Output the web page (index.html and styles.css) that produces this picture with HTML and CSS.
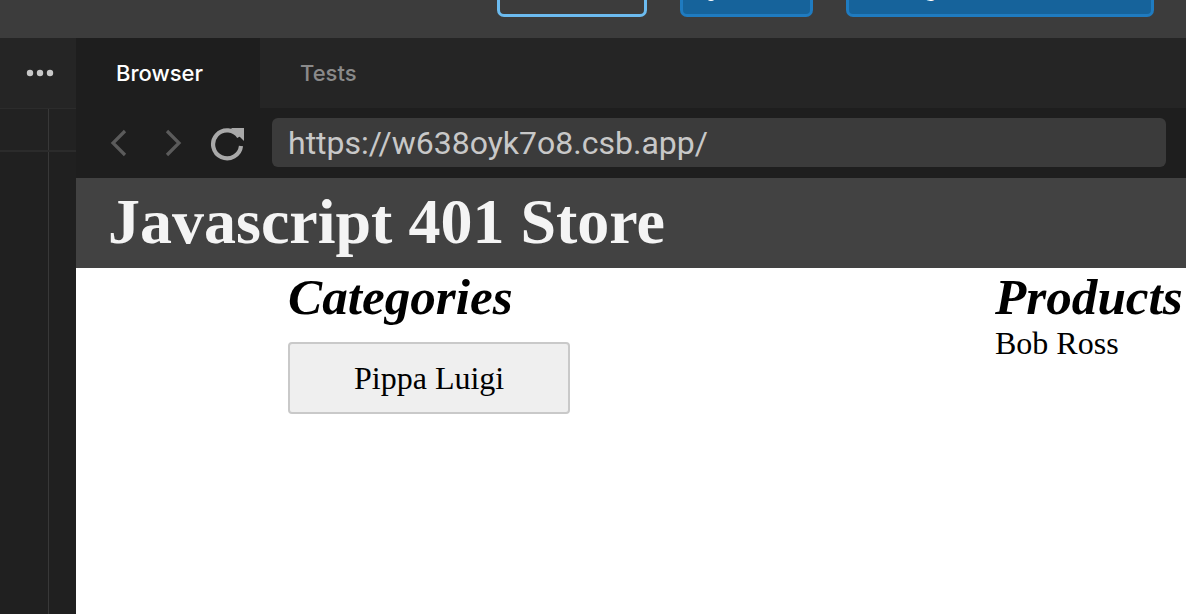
FILE: index.html
```html
<!DOCTYPE html>
<html>
<head>
<meta charset="utf-8">
<link rel="stylesheet" href="styles.css">
</head>
<body>
<div class="topbar">
  <div class="tbtn tbtn-outline"><span class="tlabel">Share</span></div>
  <div class="tbtn tbtn-blue tb2">
    <svg class="ticon" width="20" height="20" viewBox="0 0 20 20"><circle cx="10" cy="14" r="3" fill="none" stroke="#fff" stroke-width="2.2"/><path d="M10 4 V11" stroke="#fff" stroke-width="2.2"/></svg>
    <span class="tlabel">Fork</span>
  </div>
  <div class="tbtn tbtn-blue tb3">
    <svg class="ticon" width="20" height="20" viewBox="0 0 20 20"><path d="M6 10 V17 M14 10 V17" stroke="#fff" stroke-width="2.4"/></svg>
    <span class="tlabel">Sign in</span>
  </div>
</div>
<div class="main">
  <aside class="side">
    <div class="side-tabs">
      <svg width="28" height="8" viewBox="0 0 28 8"><circle cx="4" cy="4" r="3.2" fill="#c8c8c8"/><circle cx="14" cy="4" r="3.2" fill="#c8c8c8"/><circle cx="24" cy="4" r="3.2" fill="#c8c8c8"/></svg>
    </div>
    <div class="side-body">
      <div class="side-row"><div class="side-cell"></div></div>
      <div class="side-rest"><div class="side-cell"></div></div>
    </div>
  </aside>
  <section class="preview">
    <div class="tabs">
      <div class="tab active">Browser</div>
      <div class="tab">Tests</div>
    </div>
    <div class="addr">
      <div class="nav">
        <svg width="24" height="30" viewBox="0 0 24 30"><path d="M17 3 L5 15 L17 27" fill="none" stroke="#5b5b5b" stroke-width="3.2"/></svg>
        <svg width="24" height="30" viewBox="0 0 24 30"><path d="M6 3 L18 15 L6 27" fill="none" stroke="#5b5b5b" stroke-width="3.2"/></svg>
        <svg class="reload" width="38" height="38" viewBox="0 0 38 38"><path d="M30 13 A14 14 0 1 0 32 22" fill="none" stroke="#a9a9a9" stroke-width="4.2"/><path d="M22 4 L35 4 L35 17 Z" fill="#a9a9a9"/></svg>
      </div>
      <div class="url">https://w638oyk7o8.csb.app/</div>
    </div>
    <div class="page">
      <header class="store-head"><h1>Javascript 401 Store</h1></header>
      <div class="store-body">
        <div class="col cats">
          <h2>Categories</h2>
          <button class="cat-btn">Pippa Luigi</button>
        </div>
        <div class="col prods">
          <h2>Products</h2>
          <p>Bob Ross</p>
        </div>
      </div>
    </div>
  </section>
</div>
</body>
</html>
```
FILE: styles.css
```css
* { box-sizing: border-box; }
html, body { margin: 0; padding: 0; }
body {
  width: 1186px;
  height: 614px;
  overflow: hidden;
  background: #1f1f1f;
  font-family: Inter, Roboto, "Noto Sans", sans-serif;
}
.topbar {
  height: 38px;
  background: #3c3c3c;
  display: flex;
  align-items: flex-end;
  padding: 0 0 21px 497px;
  overflow: hidden;
}
.tbtn {
  flex: none;
  height: 48px;
  border: 3px solid;
  border-radius: 7px;
  display: flex;
  align-items: flex-end;
  font-family: Inter, sans-serif;
  font-size: 20px;
  font-weight: 600;
  color: #fff;
  line-height: 1;
  padding-bottom: 14px;
}
.tlabel { display: block; }
.ticon { display: block; margin-bottom: -3px; }
.tbtn-outline { width: 150px; border-color: #6cbbef; background: #3c3c3c; color: #3c3c3c; justify-content: center; }
.tbtn-blue { border-color: #1f7bc0; background: #16639b; }
.tb2 { width: 133px; margin-left: 33px; padding-left: 18px; gap: 8px; }
.tb3 { width: 308px; margin-left: 33px; padding-left: 19px; gap: 18px; }
.main {
  display: flex;
  height: 576px;
}
.side {
  width: 76px;
  flex: none;
  display: flex;
  flex-direction: column;
  background: #202020;
}
.side-tabs {
  height: 70px;
  background: #252525;
  display: flex;
  align-items: center;
  padding-left: 26px;
}
.side-body {
  flex: 1;
  display: flex;
  flex-direction: column;
  border-top: 1px solid #2c2c2c;
}
.side-row {
  height: 43px;
  background: #222222;
  border-bottom: 2px solid #2b2b2b;
  display: flex;
}
.side-rest { flex: 1; display: flex; }
.side-cell {
  width: 49px;
  border-right: 1px solid #383838;
}
.preview {
  flex: 1;
  display: flex;
  flex-direction: column;
  min-width: 0;
}
.tabs {
  height: 70px;
  background: #252525;
  display: flex;
}
.tab {
  width: 184px;
  display: flex;
  align-items: center;
  padding-left: 40px;
  font-size: 22px;
  font-weight: 500;
  color: #8a8a8a;
}
.tab.active { background: #1e1e1e; color: #ffffff; }
.addr {
  height: 70px;
  background: #1e1e1e;
  display: flex;
  align-items: center;
  padding: 0 20px 0 32px;
}
.nav {
  display: flex;
  align-items: center;
  width: 164px;
  flex: none;
}
.nav svg:nth-child(2) { margin-left: 29px; }
.nav .reload { margin-left: 24px; }
.url {
  flex: 1;
  height: 49px;
  margin-bottom: 1px;
  background: #3b3b3b;
  border-radius: 6px;
  display: flex;
  align-items: center;
  padding-left: 16px;
  font-family: Roboto, sans-serif;
  font-size: 32px;
  color: #c8c8c8;
}
.page {
  flex: 1;
  background: #ffffff;
  font-family: "Liberation Serif", "Times New Roman", serif;
  font-size: 32px;
  color: #000;
}
.store-head {
  background: #424242;
  height: 90px;
  padding: 7px 32px 0;
}
.store-head h1 {
  margin: 0;
  font-size: 64px;
  font-weight: 700;
  color: #f4f4f4;
  line-height: normal;
}
.store-body {
  display: flex;
  padding-left: 212px;
}
.col h2 {
  margin: 0;
  font-size: 51.2px;
  font-style: italic;
  font-weight: 700;
  line-height: 58px;
}
.cats { width: 707px; flex: none; }
.cat-btn {
  margin-top: 16px;
  font-family: "Liberation Serif", serif;
  font-size: 32px;
  color: #000;
  background: #efefef;
  border: 2px solid #c9c9c9;
  border-radius: 4px;
  padding: 16px 64px 15px;
  line-height: normal;
}
.prods p { margin: 0; line-height: 35px; }
.prods { white-space: nowrap; }
```
